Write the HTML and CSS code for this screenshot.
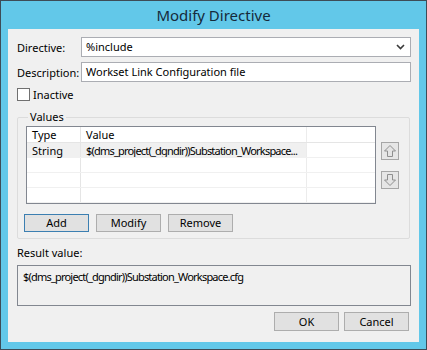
FILE: index.html
```html
<!DOCTYPE html>
<html lang="en">
<head>
    <meta charset="UTF-8">
    <title>Modify Directive</title>
    <link rel="stylesheet" href="styles.css">
</head>
<body>

<div class="window">
    <div class="titlebar">Modify Directive</div>

    <div class="client">
        <div class="field-row">
            <span class="field-label">Directive:</span>
            <div class="combo">
                <span>%include</span>
                <svg class="chevron" width="9" height="6" viewBox="0 0 9 6">
                    <path d="M1 1 L4.5 4.5 L8 1" fill="none" stroke="#3a3a3a" stroke-width="1.6"/>
                </svg>
            </div>
        </div>

        <div class="field-row">
            <span class="field-label">Description:</span>
            <div class="textbox">Workset Link Configuration file</div>
        </div>

        <div class="check-row">
            <span class="checkbox"></span>
            <span>Inactive</span>
        </div>

        <fieldset class="group">
            <legend>Values</legend>
            <div class="list-area">
                <div class="listview">
                    <div class="lv-row lv-header">
                        <div class="col-type">Type</div>
                        <div class="col-value">Value</div>
                        <div class="col-rest"></div>
                    </div>
                    <div class="lv-row lv-selected">
                        <div class="col-type">String</div>
                        <div class="col-value path-text">$(dms_project(_dgndir))Substation_Workspace...</div>
                        <div class="col-rest"></div>
                    </div>
                    <div class="lv-row">
                        <div class="col-type"></div>
                        <div class="col-value"></div>
                        <div class="col-rest"></div>
                    </div>
                    <div class="lv-row">
                        <div class="col-type"></div>
                        <div class="col-value"></div>
                        <div class="col-rest"></div>
                    </div>
                    <div class="lv-row">
                        <div class="col-type"></div>
                        <div class="col-value"></div>
                        <div class="col-rest"></div>
                    </div>
                </div>

                <div class="move-buttons">
                    <div class="arrow-btn">
                        <svg width="14" height="14" viewBox="0 0 14 14">
                            <path d="M7 1.5 L12.5 7 L9.5 7 L9.5 12.5 L4.5 12.5 L4.5 7 L1.5 7 Z" fill="#e4e4e4" stroke="#8f8f8f" stroke-width="1"/>
                        </svg>
                    </div>
                    <div class="arrow-btn">
                        <svg width="14" height="14" viewBox="0 0 14 14">
                            <path d="M7 12.5 L12.5 7 L9.5 7 L9.5 1.5 L4.5 1.5 L4.5 7 L1.5 7 Z" fill="#e4e4e4" stroke="#8f8f8f" stroke-width="1"/>
                        </svg>
                    </div>
                </div>
            </div>

            <div class="button-row">
                <div class="btn btn-default">Add</div>
                <div class="btn">Modify</div>
                <div class="btn">Remove</div>
            </div>
        </fieldset>

        <div class="result-label">Result value:</div>
        <div class="result-box path-text">$(dms_project(_dgndir))Substation_Workspace.cfg</div>

        <div class="dialog-buttons">
            <div class="btn btn-dialog">OK</div>
            <div class="btn btn-dialog">Cancel</div>
        </div>
    </div>
</div>

</body>
</html>
```

FILE: styles.css
```css
body {
  margin: 0;
  font-family: "Noto Sans", sans-serif;
  font-size: 11px;
  color: #000;
}
.window {
  width: 427px;
  height: 350px;
  box-sizing: border-box;
  border: 1px solid #3d4c57;
  background: #62c8e9;
  padding: 0 7px 7px;
}
.titlebar {
  height: 28px;
  line-height: 28px;
  text-align: center;
  font-size: 15px;
  color: #152a3b;
}
.client {
  height: 313px;
  box-sizing: border-box;
  background: #f0f0f0;
  padding: 8px 8px 0 9px;
}
.field-row {
  display: flex;
  align-items: center;
  height: 20px;
  margin-bottom: 5px;
}
.field-label {
  width: 64px;
  flex-shrink: 0;
}
.combo, .textbox {
  flex: 1;
  height: 20px;
  box-sizing: border-box;
  border: 1px solid #abadb3;
  background: #fff;
  padding: 0 4px;
  line-height: 18px;
  display: flex;
  align-items: center;
}
.combo span {
  flex: 1;
}
.chevron {
  margin-right: 1px;
}
.check-row {
  display: flex;
  align-items: center;
  gap: 3px;
  height: 12px;
  margin-top: 6px;
}
.checkbox {
  width: 11px;
  height: 11px;
  border: 1px solid #707070;
  background: #fff;
}
.group {
  margin: 10px 1px 0 0;
  padding: 2px 10px 6px 7px;
  border: 1px solid #dcdcdc;
  border-radius: 2px;
}
.group legend {
  padding: 0 2px;
  margin-left: 3px;
  line-height: 14px;
}
.list-area {
  display: flex;
  gap: 5px;
}
.listview {
  width: 350px;
  height: 78px;
  box-sizing: border-box;
  border: 1px solid #828790;
  background: #fff;
  margin-left: 1px;
}
.lv-row {
  display: flex;
  height: 15px;
  line-height: 15px;
  border-bottom: 1px solid #f0f0f0;
  box-sizing: border-box;
}
.lv-header {
  height: 16px;
  border-bottom: 1px solid #e5e5e5;
}
.col-type {
  width: 54px;
  padding-left: 5px;
  box-sizing: border-box;
  border-right: 1px solid #e5e5e5;
}
.col-value {
  width: 226px;
  padding-left: 5px;
  box-sizing: border-box;
  border-right: 1px solid #ececec;
  white-space: nowrap;
  overflow: hidden;
  text-overflow: ellipsis;
}
.col-rest {
  flex: 1;
}
.lv-selected .col-type,
.lv-selected .col-value {
  background: #f0f0f0;
}
.path-text {
  letter-spacing: -0.8px;
}
.move-buttons {
  display: flex;
  flex-direction: column;
  gap: 11px;
  margin-top: 16px;
}
.arrow-btn {
  width: 18px;
  height: 18px;
  box-sizing: border-box;
  border: 1px solid #a6a6a6;
  background: #e6e6e6;
  display: flex;
  align-items: center;
  justify-content: center;
}
.button-row {
  display: flex;
  gap: 7px;
  margin-top: 10px;
  margin-left: -1px;
}
.btn {
  width: 65px;
  height: 18px;
  box-sizing: border-box;
  border: 1px solid #adadad;
  background: #e1e1e1;
  text-align: center;
  line-height: 16px;
}
.btn-default {
  border-color: #3c7fb1;
}
.result-label {
  margin-top: 6px;
  line-height: 15px;
}
.result-box {
  height: 41px;
  box-sizing: border-box;
  border: 1px solid #828790;
  margin-top: 5px;
  padding: 3px 5px;
}
.dialog-buttons {
  display: flex;
  justify-content: flex-end;
  gap: 5px;
  margin: 6px 2px 0 0;
}
.btn-dialog {
  height: 19px;
  line-height: 17px;
}
```
